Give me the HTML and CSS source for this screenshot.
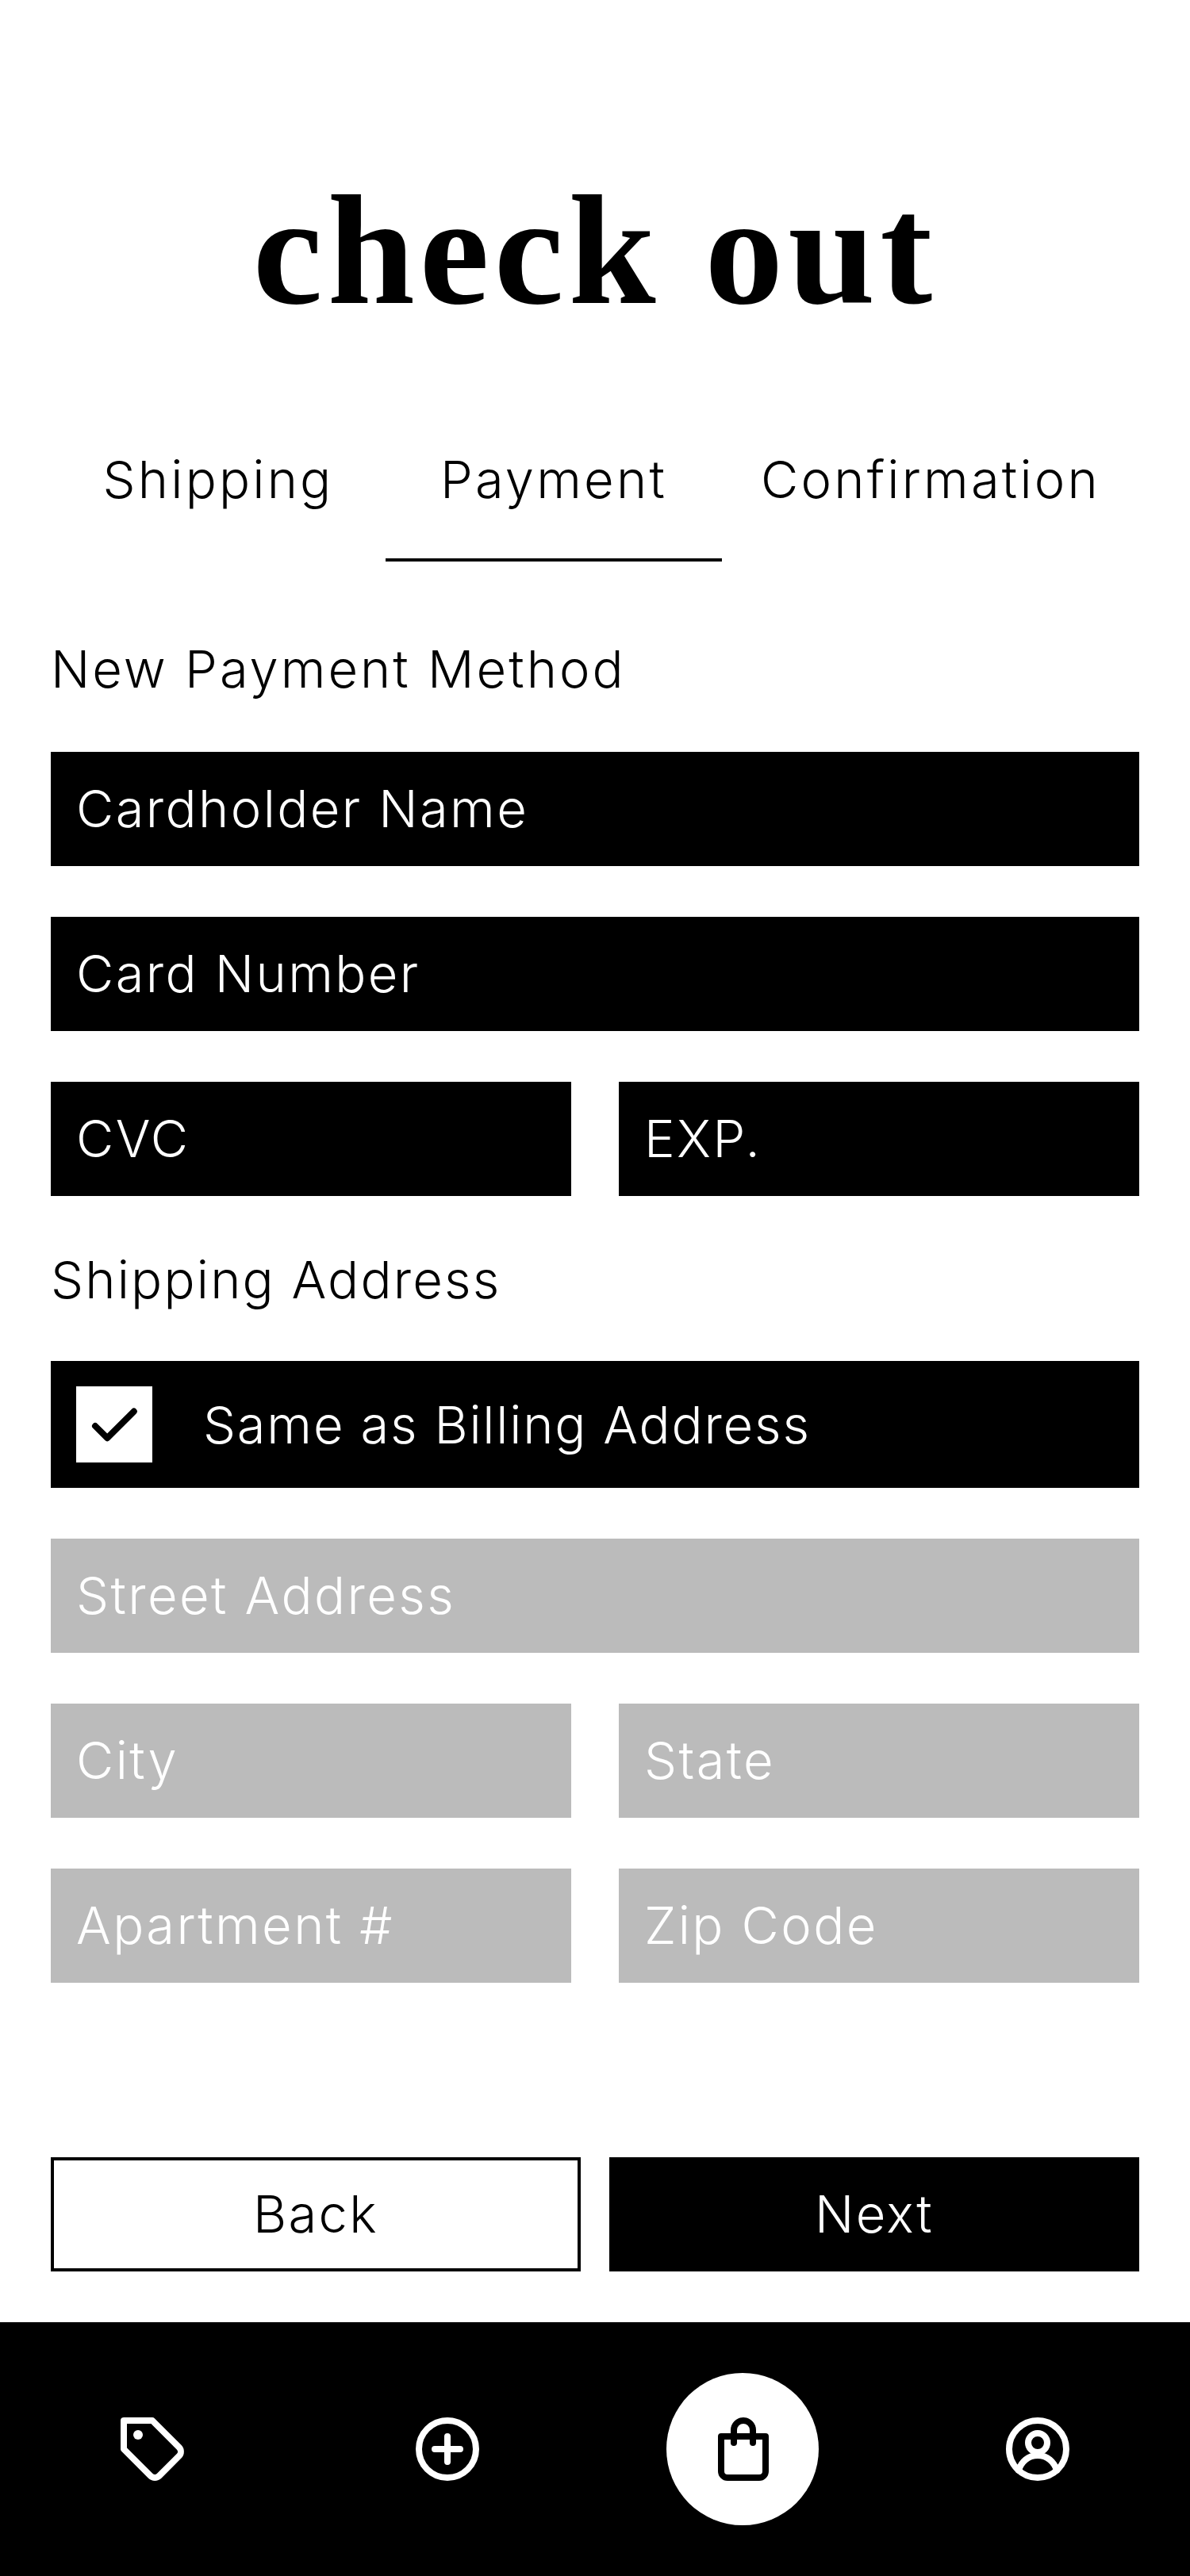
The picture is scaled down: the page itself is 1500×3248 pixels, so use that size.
FILE: index.html
```html
<!DOCTYPE html>
<html lang="en">
<head>
    <meta charset="UTF-8">
    <meta name="viewport" content="width=device-width, initial-scale=1.0">
    <title>Check out</title>
    <link rel="stylesheet" href="styles.css">
</head>
<body>

    <div class="page">
        <h1 class="title">check out</h1>

        <div class="tabs">
            <div class="tab">Shipping</div>
            <div class="tab active">Payment</div>
            <div class="tab">Confirmation</div>
        </div>

        <div class="form">
            <div class="label">New Payment Method</div>
            <div class="field">Cardholder Name</div>
            <div class="field">Card Number</div>
            <div class="row">
                <div class="field">CVC</div>
                <div class="field">EXP.</div>
            </div>

            <div class="label label-second">Shipping Address</div>
            <div class="check-row">
                <div class="checkbox">
                    <svg viewBox="0 0 24 24" class="icon-svg dark">
                        <path d="M6 12.5l3.8 3.8 8.4-8.4"/>
                    </svg>
                </div>
                <span>Same as Billing Address</span>
            </div>
            <div class="field off">Street Address</div>
            <div class="row">
                <div class="field off">City</div>
                <div class="field off">State</div>
            </div>
            <div class="row">
                <div class="field off">Apartment #</div>
                <div class="field off">Zip Code</div>
            </div>
        </div>

        <div class="buttons">
            <div class="btn btn-back">Back</div>
            <div class="btn btn-next">Next</div>
        </div>

        <div class="nav">
            <div class="nav-item">
                <svg viewBox="0 0 24 24" class="icon-svg">
                    <path d="M3 3h9l8.4 8.4a2 2 0 0 1 0 2.8l-6.2 6.2a2 2 0 0 1-2.8 0L3 12z"/>
                    <circle cx="7.5" cy="7.5" r="1.5" class="dot"/>
                </svg>
            </div>
            <div class="nav-item">
                <svg viewBox="0 0 24 24" class="icon-svg">
                    <circle cx="12" cy="12" r="9"/>
                    <path d="M12 8v8M8 12h8"/>
                </svg>
            </div>
            <div class="nav-item current">
                <svg viewBox="0 0 24 24" class="icon-svg dark">
                    <path d="M5.25 8h14v11a2 2 0 0 1-2 2h-10a2 2 0 0 1-2-2z"/>
                    <path d="M9.25 10V6a3 3 0 0 1 6 0v4"/>
                </svg>
            </div>
            <div class="nav-item">
                <svg viewBox="0 0 24 24" class="icon-svg">
                    <circle cx="12" cy="12" r="9"/>
                    <circle cx="12" cy="10" r="3"/>
                    <path d="M6 18.7c.8-2.7 3-4.7 6-4.7s5.2 2 6 4.7"/>
                </svg>
            </div>
        </div>
    </div>

</body>
</html>
```

FILE: styles.css
```css
body {
    margin: 0;
    background-color: #fff;
    color: #000;
    font-family: Inter, "Liberation Sans", sans-serif;
    font-weight: 300;
    font-size: 65px;
    letter-spacing: 2.4px;
}
.page {
    width: 1500px;
    height: 3248px;
    display: flex;
    flex-direction: column;
}
.title {
    margin: 196px 0 0;
    height: 240px;
    line-height: 240px;
    font-family: "Liberation Serif", serif;
    font-size: 198px;
    font-weight: bold;
    letter-spacing: 6px;
    text-align: center;
}
.tabs {
    margin: 122px 64px 0;
    display: grid;
    grid-template-columns: 422px 424px 1fr;
}
.tab {
    height: 146px;
    line-height: 94px;
    letter-spacing: 3.2px;
    text-align: center;
}
.tab.active {
    border-bottom: 4px solid #000;
}
.form {
    padding: 0 64px;
    display: flex;
    flex-direction: column;
}
.label {
    height: 149px;
    margin-top: 91px;
    line-height: 90px;
    letter-spacing: 3px;
}
.label-second {
    margin-top: 0;
    height: 144px;
    line-height: 84px;
    letter-spacing: 2.2px;
}
.field {
    height: 144px;
    line-height: 144px;
    padding: 0 32px;
    background: #000;
    color: #fff;
    margin-bottom: 64px;
}
.field.off {
    background: #bbb;
}
.row {
    display: grid;
    grid-template-columns: 656px 656px;
    column-gap: 60px;
}
.check-row {
    height: 160px;
    padding: 0 32px;
    display: flex;
    align-items: center;
    gap: 64px;
    background: #000;
    color: #fff;
    letter-spacing: 1.8px;
    margin-bottom: 64px;
}
.checkbox {
    width: 96px;
    height: 96px;
    background: #fff;
}
.icon-svg {
    display: block;
    width: 96px;
    height: 96px;
    fill: none;
    stroke: #fff;
    stroke-width: 2;
    stroke-linecap: round;
    stroke-linejoin: round;
}
.icon-svg.dark {
    stroke: #000;
}
.icon-svg .dot {
    fill: #fff;
    stroke: none;
}
.buttons {
    margin: 156px 64px 0;
    display: grid;
    grid-template-columns: 668px 668px;
    column-gap: 36px;
}
.btn {
    box-sizing: border-box;
    height: 144px;
    line-height: 136px;
    text-align: center;
    border: 4px solid #000;
}
.btn-next {
    background: #000;
    color: #fff;
}
.nav {
    margin-top: auto;
    height: 320px;
    padding: 0 96px;
    background: #000;
    display: flex;
    justify-content: space-between;
    align-items: center;
}
.nav-item {
    width: 192px;
    height: 192px;
    border-radius: 50%;
    display: flex;
    justify-content: center;
    align-items: center;
}
.nav-item.current {
    background: #fff;
}
```
